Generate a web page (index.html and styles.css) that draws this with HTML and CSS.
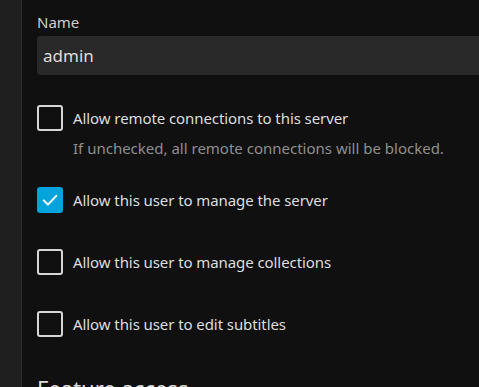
FILE: index.html
```html
<!DOCTYPE html>
<html lang="en">
<head>
  <meta charset="UTF-8" />
  <title>Profile</title>
  <link rel="stylesheet" href="styles.css">
</head>
<body>
  <div class="layout">
    <aside class="sidebar"></aside>
    <main class="content">
      <div class="input-group">
        <label class="input-label" for="name">Name</label>
        <input type="text" id="name" class="text-input" value="admin">
      </div>

      <div class="check-field">
        <label class="check-row">
          <span class="checkbox"></span>
          <span class="check-text">Allow remote connections to this server</span>
        </label>
        <div class="field-desc">If unchecked, all remote connections will be blocked.</div>
      </div>

      <div class="check-field">
        <label class="check-row">
          <span class="checkbox checked">
            <svg viewBox="0 0 24 24" width="20" height="20"><path d="M4.5 12.5l5 5 10-10.5" fill="none" stroke="#fff" stroke-width="2.4" stroke-linecap="round" stroke-linejoin="round"/></svg>
          </span>
          <span class="check-text">Allow this user to manage the server</span>
        </label>
      </div>

      <div class="check-field">
        <label class="check-row">
          <span class="checkbox"></span>
          <span class="check-text">Allow this user to manage collections</span>
        </label>
      </div>

      <div class="check-field">
        <label class="check-row">
          <span class="checkbox"></span>
          <span class="check-text">Allow this user to edit subtitles</span>
        </label>
      </div>

      <h2 class="section-title">Feature access</h2>
    </main>
  </div>
</body>
</html>
```

FILE: styles.css
```css
html, body {
  margin: 0;
  height: 100%;
  overflow: hidden;
}
body {
  font-family: 'Noto Sans', sans-serif;
  background: #101010;
  color: #ddd;
}
.layout {
  display: flex;
  height: 100%;
}
.sidebar {
  width: 21px;
  flex-shrink: 0;
  background: #1f1f1f;
  border-right: 1px solid #2e2e2e;
}
.content {
  flex: 1;
  padding: 11px 0 0 15px;
}

.input-group {
  margin-bottom: 30px;
}
.input-label {
  display: block;
  font-size: 15px;
  line-height: 22px;
  color: #cfcfcf;
  margin-bottom: 3px;
}
.text-input {
  display: block;
  box-sizing: border-box;
  width: 100%;
  height: 39px;
  padding: 0 6px 1px;
  border: none;
  border-radius: 4px 0 0 4px;
  background: #292929;
  color: #ddd;
  font-family: inherit;
  font-size: 17px;
}

.check-field {
  margin-bottom: 36px;
}
.check-row {
  display: flex;
  align-items: center;
  gap: 10px;
  height: 26px;
}
.checkbox {
  box-sizing: border-box;
  width: 26px;
  height: 26px;
  border: 2px solid #d6d6d6;
  border-radius: 3px;
  display: flex;
  align-items: center;
  justify-content: center;
}
.checkbox.checked {
  background: #00a4dc;
  border-color: #00a4dc;
}
.check-text {
  font-size: 15px;
  letter-spacing: -0.08px;
  color: #dedede;
}
.field-desc {
  margin: 6px 0 -8px 36px;
  font-size: 15px;
  line-height: 22px;
  color: #8f8f8f;
}

.section-title {
  margin: 0;
  font-size: 22px;
  font-weight: 400;
  color: #ddd;
}
```
